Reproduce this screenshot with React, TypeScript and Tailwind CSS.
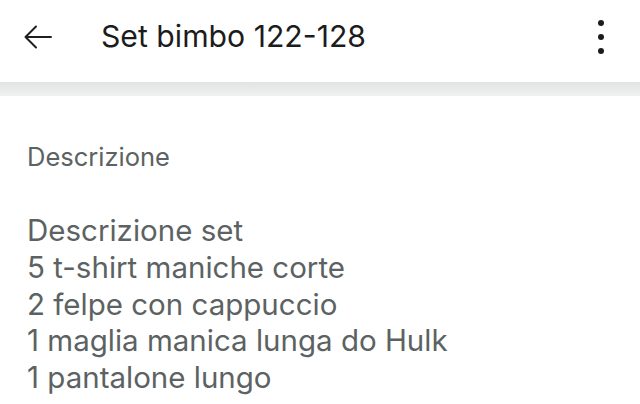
export default function App() {
    return (
        <div className="w-[640px] h-[404px] bg-white overflow-hidden font-['Inter',sans-serif]">
            {/* Top bar */}
            <div className="h-[82px] flex items-center pl-[24px] pr-[36px] pb-[8px]">
                <svg width="28" height="24" viewBox="0 0 28 24" fill="none" stroke="#1f1f1f" strokeWidth="2" strokeLinecap="round" strokeLinejoin="round">
                    <path d="M27 12H2M12 1.5L1.5 12L12 22.5" />
                </svg>
                <h1 className="ml-[49px] text-[30.2px] text-[#1c1c1c]">Set bimbo 122-128</h1>
                <div className="ml-auto flex flex-col gap-[8px] items-center">
                    <span className="w-[6px] h-[6px] rounded-full bg-[#1c1c1c]" />
                    <span className="w-[6px] h-[6px] rounded-full bg-[#1c1c1c]" />
                    <span className="w-[6px] h-[6px] rounded-full bg-[#1c1c1c]" />
                </div>
            </div>
            <div className="h-[14px] bg-gradient-to-b from-[#dfe3e2] to-[#eff2f1]" />

            {/* Content */}
            <div className="px-[27px] pt-[45px] text-[#5c6262]">
                <p className="text-[25.5px] leading-[32px]">Descrizione</p>
                <div className="mt-[39px] text-[29.5px] leading-[36.8px]">
                    <p>Descrizione set</p>
                    <p>5 t-shirt maniche corte</p>
                    <p>2 felpe con cappuccio</p>
                    <p>1 maglia manica lunga do Hulk</p>
                    <p>1 pantalone lungo</p>
                </div>
            </div>
        </div>
    );
}
